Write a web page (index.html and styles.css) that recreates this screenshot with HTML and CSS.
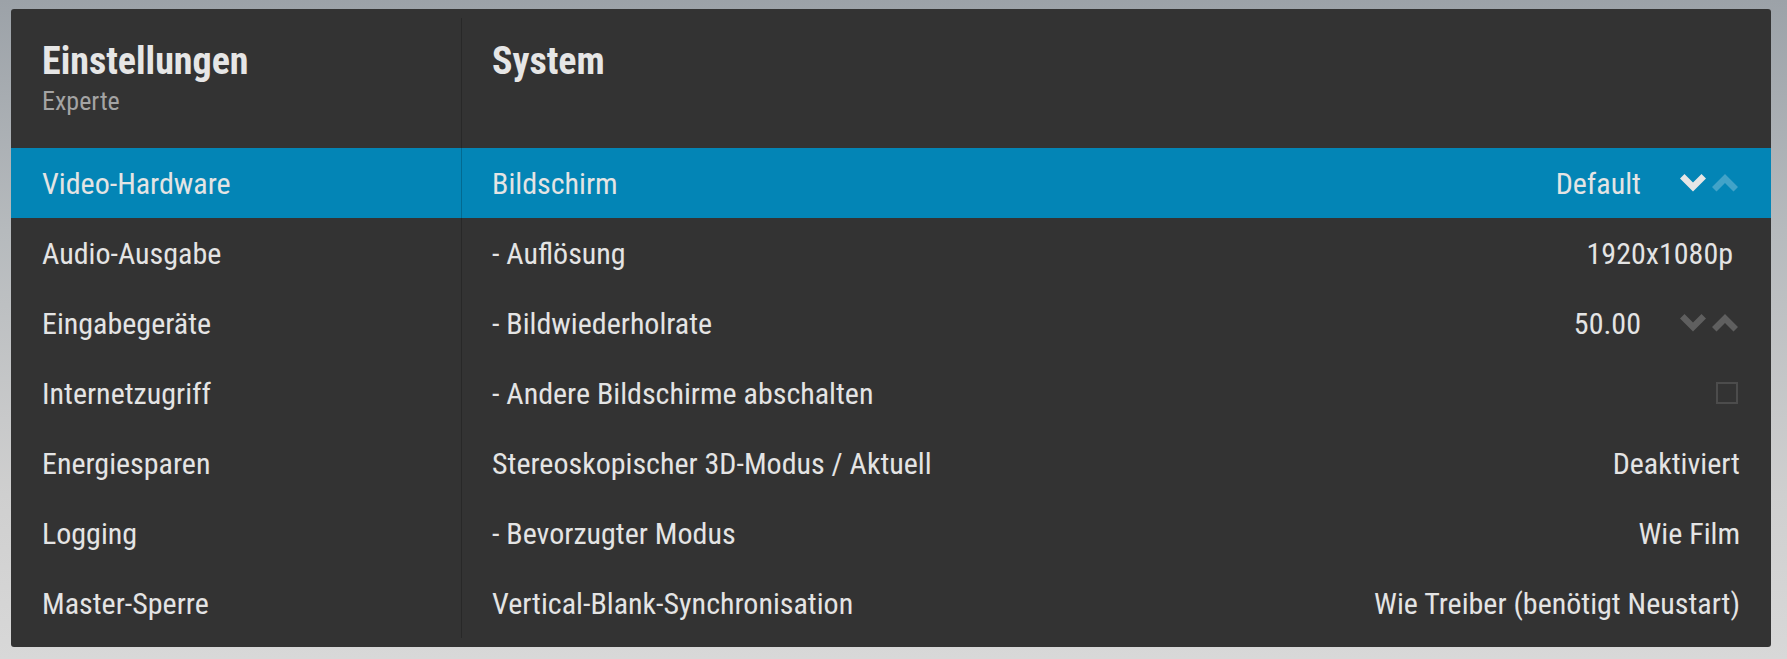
FILE: index.html
```html
<!DOCTYPE html>
<html>
<head>
    <title>Einstellungen - System</title>
    <link rel="stylesheet" href="styles.css">
</head>
<body>
    <div class="dialog">
        <aside class="sidebar">
            <div class="header">
                <h1 class="title">Einstellungen</h1>
                <div class="subtitle">Experte</div>
            </div>
            <ul class="menu">
                <li class="item active">Video-Hardware</li>
                <li class="item">Audio-Ausgabe</li>
                <li class="item">Eingabegeräte</li>
                <li class="item">Internetzugriff</li>
                <li class="item">Energiesparen</li>
                <li class="item">Logging</li>
                <li class="item">Master-Sperre</li>
            </ul>
        </aside>
        <section class="content">
            <div class="header">
                <h1 class="title">System</h1>
            </div>
            <ul class="settings">
                <li class="setting active">
                    <span class="label">Bildschirm</span>
                    <span class="value">Default</span>
                    <span class="spin">
                        <svg class="arrow down" width="26" height="18" viewBox="0 0 26 18"><polygon points="0,4.5 4.5,0 13,8.5 21.5,0 26,4.5 13,17.5"/></svg>
                        <svg class="arrow up" width="26" height="18" viewBox="0 0 26 18"><polygon points="0,13 13,0 26,13 21.5,17.5 13,9 4.5,17.5"/></svg>
                    </span>
                </li>
                <li class="setting">
                    <span class="label">- Auflösung</span>
                    <span class="value res">1920x1080p</span>
                </li>
                <li class="setting">
                    <span class="label">- Bildwiederholrate</span>
                    <span class="value">50.00</span>
                    <span class="spin dim">
                        <svg class="arrow down" width="26" height="18" viewBox="0 0 26 18"><polygon points="0,4.5 4.5,0 13,8.5 21.5,0 26,4.5 13,17.5"/></svg>
                        <svg class="arrow up" width="26" height="18" viewBox="0 0 26 18"><polygon points="0,13 13,0 26,13 21.5,17.5 13,9 4.5,17.5"/></svg>
                    </span>
                </li>
                <li class="setting">
                    <span class="label">- Andere Bildschirme abschalten</span>
                    <span class="checkbox"></span>
                </li>
                <li class="setting">
                    <span class="label">Stereoskopischer 3D-Modus / Aktuell</span>
                    <span class="value">Deaktiviert</span>
                </li>
                <li class="setting">
                    <span class="label">- Bevorzugter Modus</span>
                    <span class="value">Wie Film</span>
                </li>
                <li class="setting">
                    <span class="label">Vertical-Blank-Synchronisation</span>
                    <span class="value">Wie Treiber (benötigt Neustart)</span>
                </li>
            </ul>
        </section>
    </div>
</body>
</html>
```

FILE: styles.css
```css
html, body {
    height: 100%;
}

body {
    margin: 0;
    font-family: "Roboto Condensed", Roboto, "Liberation Sans Narrow", sans-serif;
    font-stretch: condensed;
    background: linear-gradient(180deg, #9ca2a8 0%, #b6babd 35%, #cfcfcf 75%, #d8d8d8 100%);
    overflow: hidden;
}

.dialog {
    display: flex;
    height: 638px;
    margin: 9px 16px 0 11px;
    background-color: #333333;
    border-radius: 3px;
    color: #e4e4e4;
    overflow: hidden;
}

.sidebar {
    flex: none;
    width: 450px;
}

.content {
    flex: 1;
    position: relative;
}

/* linha divisória entre as colunas */
.content::before {
    content: "";
    position: absolute;
    left: 0;
    top: 9px;
    bottom: 9px;
    width: 1px;
    background-color: rgba(0, 0, 0, 0.2);
    z-index: 1;
}

.header {
    height: 139px;
    box-sizing: border-box;
    padding: 29px 31px 0 31px;
}

.title {
    margin: 0;
    font-size: 38px;
    font-weight: 700;
    line-height: 46px;
    color: #e6e6e6;
}

.subtitle {
    margin-top: 2px;
    font-size: 26px;
    line-height: 30px;
    color: #a4a4a4;
}

.menu,
.settings {
    list-style: none;
    margin: 0;
    padding: 0;
}

.item,
.setting {
    display: flex;
    align-items: center;
    height: 70px;
    padding: 0 31px;
    font-size: 30px;
    white-space: nowrap;
}

.active {
    background-color: #0385b6;
}

.setting .label {
    flex: 1;
}

.value.res {
    margin-right: 7px;
}

.spin {
    display: flex;
    gap: 6px;
    margin-left: 39px;
    margin-right: 2px;
}

.arrow {
    display: block;
}

.arrow.down {
    fill: #e6e6e6;
}

.arrow.up {
    fill: rgba(255, 255, 255, 0.25);
}

.spin.dim .arrow {
    fill: #5f5f5f;
}

.checkbox {
    width: 18px;
    height: 18px;
    margin-right: 2px;
    border: 2px solid #4c4c4c;
}
```
